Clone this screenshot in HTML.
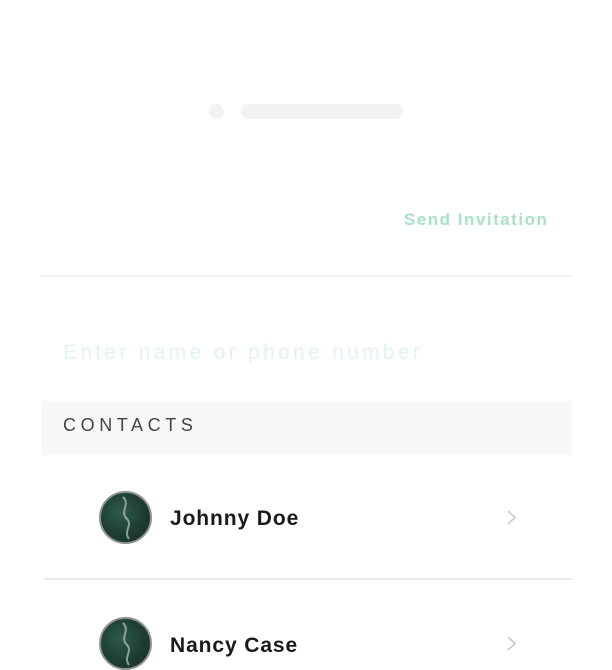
<!DOCTYPE html>
<html><head><meta charset="utf-8"><style>
*{margin:0;padding:0;box-sizing:border-box}
html,body{width:612px;height:669px;overflow:hidden;background:#fff;font-family:"Liberation Sans",sans-serif}
.a{position:absolute}
.av{width:53px;height:53px;border-radius:50%;border:2px solid #8e9290;background:radial-gradient(circle at 40% 40%,#2f5a4c,#1c3a31 60%,#16302a);overflow:hidden}
.name{font-size:21px;font-weight:bold;color:#1a1a1a;letter-spacing:0.9px}
</style></head><body>
<div class="a" style="left:209px;top:104px;width:15px;height:15px;border-radius:50%;background:#f2f2f2"></div>
<div class="a" style="left:241px;top:104px;width:162px;height:15px;border-radius:8px;background:#f2f2f2"></div>
<div class="a" style="left:404px;top:210px;font-size:17px;font-weight:bold;color:#a9e2c6;letter-spacing:1.5px">Send Invitation</div>
<div class="a" style="left:40px;top:275px;width:532px;height:2px;background:#f2f2f2"></div>
<div class="a" style="left:63px;top:341px;font-size:21px;color:#e2f3ea;letter-spacing:3.3px">Enter name or phone number</div>
<div class="a" style="left:41px;top:401px;width:531px;height:54px;background:#f7f7f7"></div>
<div class="a" style="left:63px;top:415px;font-size:18px;color:#444;letter-spacing:4.6px">CONTACTS</div>
<div class="a" style="left:44px;top:578px;width:528px;height:2px;background:#ebebeb"></div>
<div class="a av" style="left:99px;top:491px"><svg width="53" height="53"><path d="M22 4 C30 12 18 18 26 26 C32 32 22 38 28 46" stroke="#b8c8c0" stroke-width="2" fill="none" opacity=".7"/></svg></div>
<div class="a name" style="left:170px;top:507px">Johnny Doe</div>
<svg class="a" style="left:506px;top:509px" width="12" height="17"><path d="M2 2 L9 8.5 L2 15" stroke="#c4c4c4" stroke-width="1.5" fill="none"/></svg>
<div class="a av" style="left:99px;top:617px"><svg width="53" height="53"><path d="M22 4 C30 12 18 18 26 26 C32 32 22 38 28 46" stroke="#b8c8c0" stroke-width="2" fill="none" opacity=".7"/></svg></div>
<div class="a name" style="left:170px;top:634px">Nancy Case</div>
<svg class="a" style="left:506px;top:635px" width="12" height="17"><path d="M2 2 L9 8.5 L2 15" stroke="#c4c4c4" stroke-width="1.5" fill="none"/></svg>
</body></html>
